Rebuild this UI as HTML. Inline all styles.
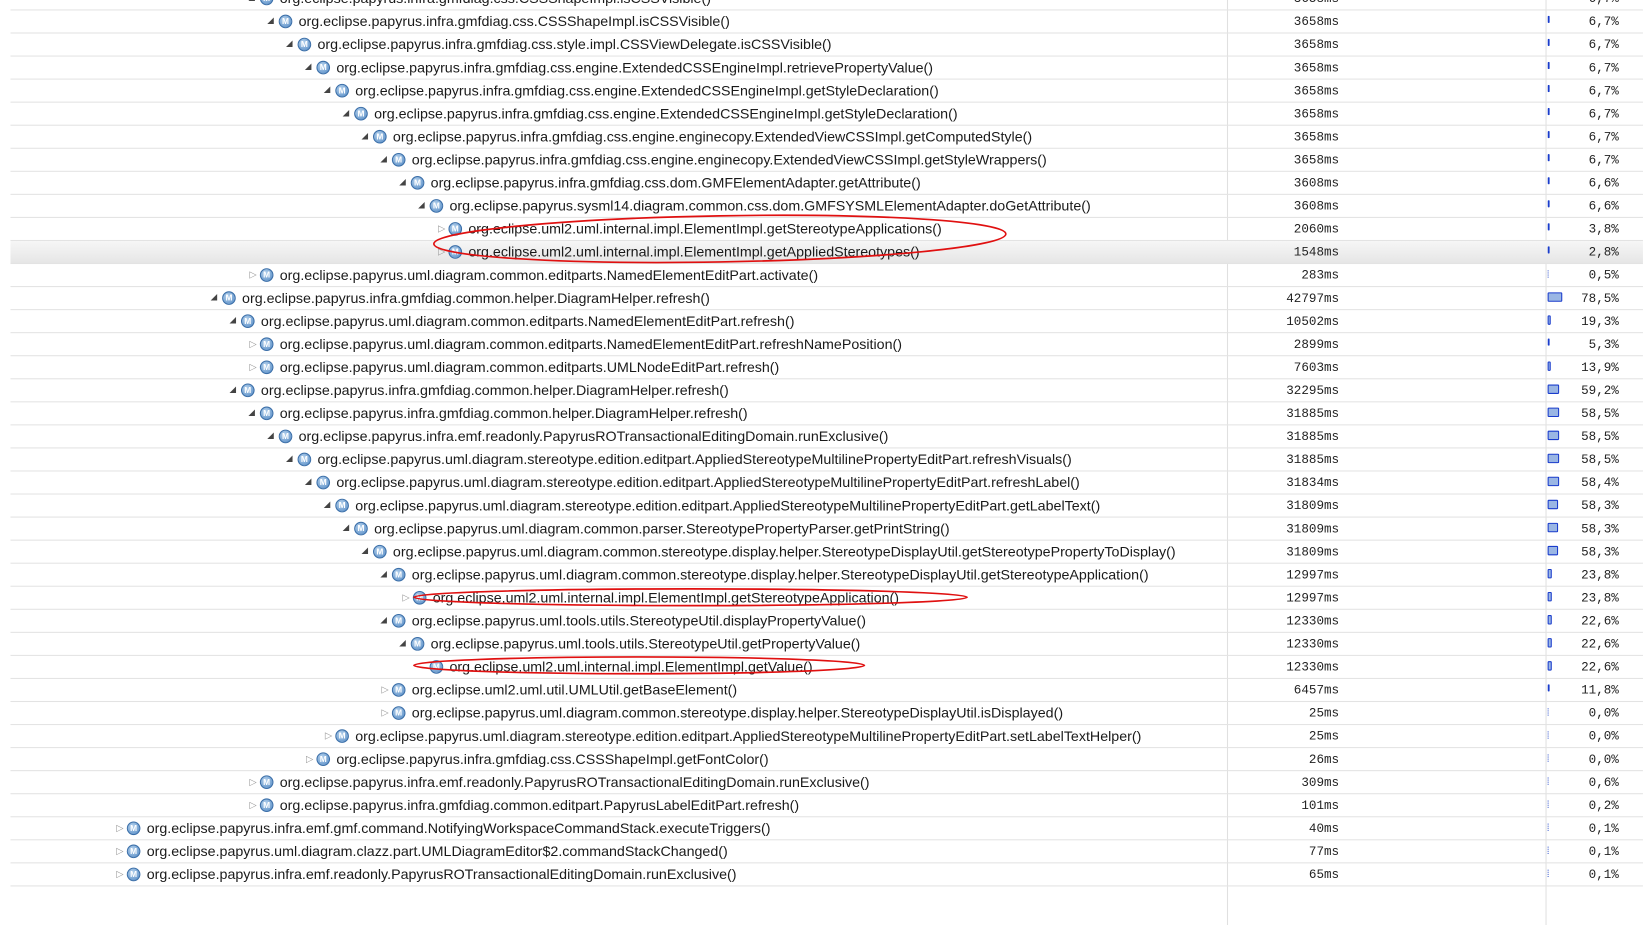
<!DOCTYPE html><html><head><meta charset="utf-8"><style>
body{margin:0;width:1643px;height:883px;background:#fff;overflow:hidden;position:relative;font-family:"Liberation Sans",sans-serif}
#w{position:absolute;left:0;top:0;width:1568px;height:843px;transform:scale(1.0478);transform-origin:0 0}
.r{position:absolute;left:10px;width:1558px;height:21px;border-bottom:1px solid #e3e3e3}
.t{position:absolute;top:2px;font-size:13.6px;color:#1a1a1a;white-space:nowrap;line-height:17px}
.a{position:absolute;top:5px;font-size:9px;color:#444}
.c{position:absolute;top:4px;width:11px;height:11px;border-radius:50%;background:radial-gradient(circle at 40% 35%,#b8d4ee,#4f86c2);border:1px solid #3a6ea8;color:#fff;font-size:8px;line-height:11px;text-align:center;font-weight:bold}
.m{position:absolute;right:290px;top:4px;font-family:"Liberation Mono",monospace;font-size:12px;color:#222}
.p{position:absolute;right:23px;top:4px;font-family:"Liberation Mono",monospace;font-size:12px;color:#222}
.b{position:absolute;left:1467px;top:5px;height:7px;background:#9ab6e4;border:1px solid #1a3ccc;border-radius:1px}
.v{position:absolute;top:0;width:1px;height:883px;background:#e0e0e0}
.hl{background:linear-gradient(#f6f6f6,#e6e6e6)}
</style></head><body><div id="w">
<div class="v" style="left:1171px"></div><div class="v" style="left:1475px"></div>
<div id="rows"></div>
<script>
var R=[
[267,1,"org.eclipse.papyrus.infra.gmfdiag.css.CSSShapeImpl.isCSSVisible()","3658ms","6,7%"],
[285,1,"org.eclipse.papyrus.infra.gmfdiag.css.CSSShapeImpl.isCSSVisible()","3658ms","6,7%"],
[303,1,"org.eclipse.papyrus.infra.gmfdiag.css.style.impl.CSSViewDelegate.isCSSVisible()","3658ms","6,7%"],
[321,1,"org.eclipse.papyrus.infra.gmfdiag.css.engine.ExtendedCSSEngineImpl.retrievePropertyValue()","3658ms","6,7%"],
[339,1,"org.eclipse.papyrus.infra.gmfdiag.css.engine.ExtendedCSSEngineImpl.getStyleDeclaration()","3658ms","6,7%"],
[357,1,"org.eclipse.papyrus.infra.gmfdiag.css.engine.ExtendedCSSEngineImpl.getStyleDeclaration()","3658ms","6,7%"],
[375,1,"org.eclipse.papyrus.infra.gmfdiag.css.engine.enginecopy.ExtendedViewCSSImpl.getComputedStyle()","3658ms","6,7%"],
[393,1,"org.eclipse.papyrus.infra.gmfdiag.css.engine.enginecopy.ExtendedViewCSSImpl.getStyleWrappers()","3658ms","6,7%"],
[411,1,"org.eclipse.papyrus.infra.gmfdiag.css.dom.GMFElementAdapter.getAttribute()","3608ms","6,6%"],
[429,1,"org.eclipse.papyrus.sysml14.diagram.common.css.dom.GMFSYSMLElementAdapter.doGetAttribute()","3608ms","6,6%"],
[447,2,"org.eclipse.uml2.uml.internal.impl.ElementImpl.getStereotypeApplications()","2060ms","3,8%"],
[447,2,"org.eclipse.uml2.uml.internal.impl.ElementImpl.getAppliedStereotypes()","1548ms","2,8%"],
[267,2,"org.eclipse.papyrus.uml.diagram.common.editparts.NamedElementEditPart.activate()","283ms","0,5%"],
[231,1,"org.eclipse.papyrus.infra.gmfdiag.common.helper.DiagramHelper.refresh()","42797ms","78,5%"],
[249,1,"org.eclipse.papyrus.uml.diagram.common.editparts.NamedElementEditPart.refresh()","10502ms","19,3%"],
[267,2,"org.eclipse.papyrus.uml.diagram.common.editparts.NamedElementEditPart.refreshNamePosition()","2899ms","5,3%"],
[267,2,"org.eclipse.papyrus.uml.diagram.common.editparts.UMLNodeEditPart.refresh()","7603ms","13,9%"],
[249,1,"org.eclipse.papyrus.infra.gmfdiag.common.helper.DiagramHelper.refresh()","32295ms","59,2%"],
[267,1,"org.eclipse.papyrus.infra.gmfdiag.common.helper.DiagramHelper.refresh()","31885ms","58,5%"],
[285,1,"org.eclipse.papyrus.infra.emf.readonly.PapyrusROTransactionalEditingDomain.runExclusive()","31885ms","58,5%"],
[303,1,"org.eclipse.papyrus.uml.diagram.stereotype.edition.editpart.AppliedStereotypeMultilinePropertyEditPart.refreshVisuals()","31885ms","58,5%"],
[321,1,"org.eclipse.papyrus.uml.diagram.stereotype.edition.editpart.AppliedStereotypeMultilinePropertyEditPart.refreshLabel()","31834ms","58,4%"],
[339,1,"org.eclipse.papyrus.uml.diagram.stereotype.edition.editpart.AppliedStereotypeMultilinePropertyEditPart.getLabelText()","31809ms","58,3%"],
[357,1,"org.eclipse.papyrus.uml.diagram.common.parser.StereotypePropertyParser.getPrintString()","31809ms","58,3%"],
[375,1,"org.eclipse.papyrus.uml.diagram.common.stereotype.display.helper.StereotypeDisplayUtil.getStereotypePropertyToDisplay()","31809ms","58,3%"],
[393,1,"org.eclipse.papyrus.uml.diagram.common.stereotype.display.helper.StereotypeDisplayUtil.getStereotypeApplication()","12997ms","23,8%"],
[413,2,"org.eclipse.uml2.uml.internal.impl.ElementImpl.getStereotypeApplication()","12997ms","23,8%"],
[393,1,"org.eclipse.papyrus.uml.tools.utils.StereotypeUtil.displayPropertyValue()","12330ms","22,6%"],
[411,1,"org.eclipse.papyrus.uml.tools.utils.StereotypeUtil.getPropertyValue()","12330ms","22,6%"],
[429,0,"org.eclipse.uml2.uml.internal.impl.ElementImpl.getValue()","12330ms","22,6%"],
[393,2,"org.eclipse.uml2.uml.util.UMLUtil.getBaseElement()","6457ms","11,8%"],
[393,2,"org.eclipse.papyrus.uml.diagram.common.stereotype.display.helper.StereotypeDisplayUtil.isDisplayed()","25ms","0,0%"],
[339,2,"org.eclipse.papyrus.uml.diagram.stereotype.edition.editpart.AppliedStereotypeMultilinePropertyEditPart.setLabelTextHelper()","25ms","0,0%"],
[321,2,"org.eclipse.papyrus.infra.gmfdiag.css.CSSShapeImpl.getFontColor()","26ms","0,0%"],
[267,2,"org.eclipse.papyrus.infra.emf.readonly.PapyrusROTransactionalEditingDomain.runExclusive()","309ms","0,6%"],
[267,2,"org.eclipse.papyrus.infra.gmfdiag.common.editpart.PapyrusLabelEditPart.refresh()","101ms","0,2%"],
[140,2,"org.eclipse.papyrus.infra.emf.gmf.command.NotifyingWorkspaceCommandStack.executeTriggers()","40ms","0,1%"],
[140,2,"org.eclipse.papyrus.uml.diagram.clazz.part.UMLDiagramEditor$2.commandStackChanged()","77ms","0,1%"],
[140,2,"org.eclipse.papyrus.infra.emf.readonly.PapyrusROTransactionalEditingDomain.runExclusive()","65ms","0,1%"]];
var h="";
R.forEach(function(r,i){
 var top=-12+22*i, x=r[0]-10, pct=parseFloat(r[4].replace(',','.'));
 var w=Math.max(1,Math.round(pct*0.18));
 var arrow=r[1]==1?'<span class="a" style="left:'+(x-30)+'px;font-size:8px">&#9698;</span>':r[1]==2?'<span class="a" style="left:'+(x-29)+'px;color:#999">&#9655;</span>':'';
 var bar=pct<1?'<div style="position:absolute;left:1467px;top:6px;width:0;height:7px;border-left:1px dotted #4060d0"></div>':'<div class="b" style="width:'+Math.max(0,w-2)+'px;'+(w<=2?'border-width:0 0 0 2px;':'')+'"></div>';
 h+='<div class="r'+(i==11?' hl':'')+'" style="top:'+top+'px">'+arrow+'<div class="c" style="left:'+(x-19)+'px">M</div><div class="t" style="left:'+x+'px">'+r[2]+'</div><div class="m">'+r[3]+'</div>'+bar+'<div class="p">'+r[4]+'</div></div>';
});
document.getElementById("rows").innerHTML=h;
</script>
<svg width="1568" height="843" style="position:absolute;left:0;top:0">
<ellipse cx="687" cy="228" rx="273" ry="22" fill="none" stroke="#e01010" stroke-width="1.6" transform="rotate(-1 687 228)"/>
<ellipse cx="659" cy="570" rx="264" ry="8" fill="none" stroke="#e01010" stroke-width="1.6"/>
<ellipse cx="610" cy="635" rx="215" ry="8" fill="none" stroke="#e01010" stroke-width="1.6"/>
</svg>
</div></body></html>
